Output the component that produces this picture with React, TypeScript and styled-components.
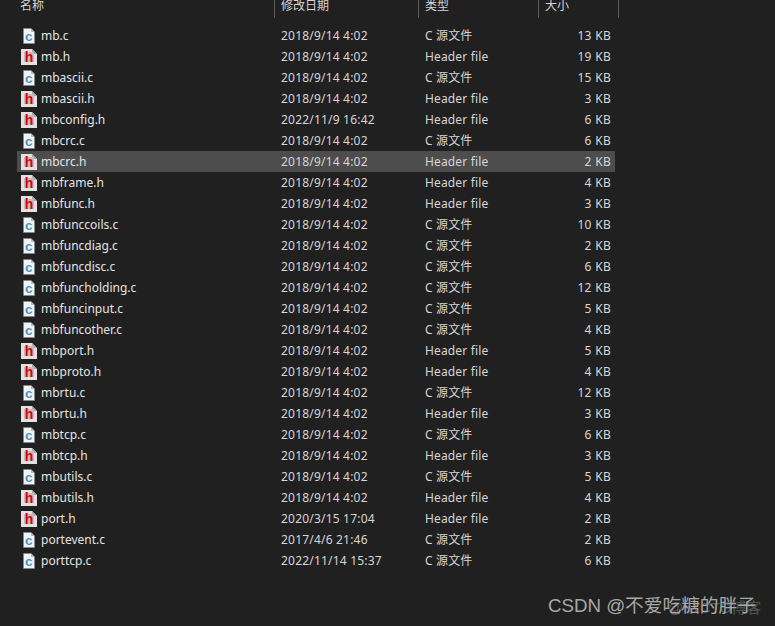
import React from 'react'
import styled, { createGlobalStyle } from 'styled-components'

type FileRow = { name: string; date: string; size: string }

const files: FileRow[] = [
  { name: 'mb.c', date: '2018/9/14 4:02', size: '13 KB' },
  { name: 'mb.h', date: '2018/9/14 4:02', size: '19 KB' },
  { name: 'mbascii.c', date: '2018/9/14 4:02', size: '15 KB' },
  { name: 'mbascii.h', date: '2018/9/14 4:02', size: '3 KB' },
  { name: 'mbconfig.h', date: '2022/11/9 16:42', size: '6 KB' },
  { name: 'mbcrc.c', date: '2018/9/14 4:02', size: '6 KB' },
  { name: 'mbcrc.h', date: '2018/9/14 4:02', size: '2 KB' },
  { name: 'mbframe.h', date: '2018/9/14 4:02', size: '4 KB' },
  { name: 'mbfunc.h', date: '2018/9/14 4:02', size: '3 KB' },
  { name: 'mbfunccoils.c', date: '2018/9/14 4:02', size: '10 KB' },
  { name: 'mbfuncdiag.c', date: '2018/9/14 4:02', size: '2 KB' },
  { name: 'mbfuncdisc.c', date: '2018/9/14 4:02', size: '6 KB' },
  { name: 'mbfuncholding.c', date: '2018/9/14 4:02', size: '12 KB' },
  { name: 'mbfuncinput.c', date: '2018/9/14 4:02', size: '5 KB' },
  { name: 'mbfuncother.c', date: '2018/9/14 4:02', size: '4 KB' },
  { name: 'mbport.h', date: '2018/9/14 4:02', size: '5 KB' },
  { name: 'mbproto.h', date: '2018/9/14 4:02', size: '4 KB' },
  { name: 'mbrtu.c', date: '2018/9/14 4:02', size: '12 KB' },
  { name: 'mbrtu.h', date: '2018/9/14 4:02', size: '3 KB' },
  { name: 'mbtcp.c', date: '2018/9/14 4:02', size: '6 KB' },
  { name: 'mbtcp.h', date: '2018/9/14 4:02', size: '3 KB' },
  { name: 'mbutils.c', date: '2018/9/14 4:02', size: '5 KB' },
  { name: 'mbutils.h', date: '2018/9/14 4:02', size: '4 KB' },
  { name: 'port.h', date: '2020/3/15 17:04', size: '2 KB' },
  { name: 'portevent.c', date: '2017/4/6 21:46', size: '2 KB' },
  { name: 'porttcp.c', date: '2022/11/14 15:37', size: '6 KB' },
]

const GlobalStyle = createGlobalStyle`
  html, body {
    margin: 0;
    padding: 0;
    background: #202020;
  }
`

const CIcon = () => (
  <svg width="16" height="16" viewBox="0 0 16 16">
    <path d="M2.5 0.5h7.5l3.5 3.5v11.5h-11z" fill="#f1f4f6" stroke="#7f868b" strokeWidth="0.7" />
    <path d="M10 0.5v3.5h3.5z" fill="#b4babf" />
    <text x="7.8" y="12.5" textAnchor="middle" fontFamily="Liberation Sans, sans-serif" fontWeight="700" fontSize="13.5" fill="#4d93c2">c</text>
  </svg>
)

const HIcon = () => (
  <svg width="16" height="16" viewBox="0 0 16 16">
    <path d="M0 0h11l5 5v11H0z" fill="#e4e1e1" />
    <path d="M11 0v5h5z" fill="#a8a8a8" />
    <path d="M3 3h10v10H3z" fill="#c4bcbc" />
    <text x="8" y="13" textAnchor="middle" fontFamily="Liberation Sans, sans-serif" fontWeight="700" fontSize="14" fill="#e0000f">h</text>
  </svg>
)

const Page = styled.div`
  position: relative;
  width: 775px;
  height: 626px;
  overflow: hidden;
  background: #202020;
  font-family: "Noto Sans", "Noto Sans CJK SC", sans-serif;
  font-size: 12px;
  color: #e4e4e4;
`

const Header = styled.div`
  display: flex;
  height: 18px;
  margin-bottom: 7px;
`

const HeaderCell = styled.div<{ $width: number; $pad: number }>`
  width: ${p => p.$width}px;
  box-sizing: border-box;
  height: 18px;
  padding-left: ${p => p.$pad}px;
  line-height: 11px;
  color: #d4d4d4;
  border-right: 1px solid #5a5a5a;
  overflow: hidden;
`

const List = styled.div`
  display: flex;
  flex-direction: column;
  margin-left: 17px;
  width: 598px;
`

const Row = styled.div<{ $active?: boolean }>`
  display: flex;
  align-items: center;
  height: 21px;
  background: ${p => (p.$active ? '#4d4d4d' : 'transparent')};
`

const IconBox = styled.div`
  display: flex;
  width: 16px;
  height: 16px;
  margin-left: 4px;
  margin-right: 4px;
`

const Name = styled.div`
  width: 240px;
`

const DateCell = styled.div`
  width: 144px;
  color: #d6d6d6;
  letter-spacing: 0.2px;
`

// the CJK fallback sits a pixel low, padding lifts it back on the row
const TypeCell = styled.div<{ $cjk?: boolean }>`
  width: 120px;
  color: #d6d6d6;
  letter-spacing: 0.15px;
  padding-bottom: ${p => (p.$cjk ? '2px' : '0')};
`

const SizeCell = styled.div`
  width: 66px;
  text-align: right;
  color: #d6d6d6;
  letter-spacing: 0.3px;
`

const Watermark = styled.div`
  position: absolute;
  left: 548px;
  top: 594px;
  font-family: "Liberation Sans", "Noto Sans CJK SC", sans-serif;
  font-size: 18.7px;
  line-height: 24px;
  color: #a8a8a8;
  white-space: nowrap;
`

const Faint = styled.div`
  position: absolute;
  left: 668px;
  top: 598px;
  font-family: "Liberation Sans", "Noto Sans CJK SC", sans-serif;
  font-size: 15px;
  line-height: 20px;
  color: #555555;
  white-space: nowrap;
`

const App = () => {
  return (
    <Page>
      <GlobalStyle />
      <Header>
        <HeaderCell $width={275} $pad={20}>名称</HeaderCell>
        <HeaderCell $width={144} $pad={6}>修改日期</HeaderCell>
        <HeaderCell $width={120} $pad={6}>类型</HeaderCell>
        <HeaderCell $width={80} $pad={6}>大小</HeaderCell>
      </Header>
      <List>
        {files.map(f => {
          const isC = f.name.endsWith('.c')
          return (
            <Row key={f.name} $active={f.name === 'mbcrc.h'}>
              <IconBox>{isC ? <CIcon /> : <HIcon />}</IconBox>
              <Name>{f.name}</Name>
              <DateCell>{f.date}</DateCell>
              <TypeCell $cjk={isC}>{isC ? 'C 源文件' : 'Header file'}</TypeCell>
              <SizeCell>{f.size}</SizeCell>
            </Row>
          )
        })}
      </List>
      <Faint>@51CTO博客</Faint>
      <Watermark>CSDN @不爱吃糖的胖子</Watermark>
    </Page>
  )
}

export default App
